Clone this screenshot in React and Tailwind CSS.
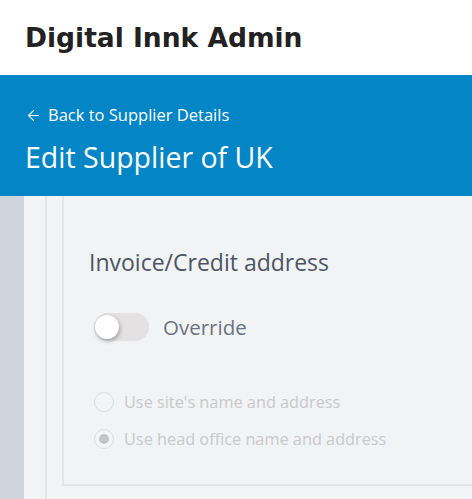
import React, { useState } from 'react';
import { ArrowLeft } from 'lucide-react';

const ui = { fontFamily: '"Segoe UI", "Open Sans", "Noto Sans", sans-serif' };

const Toggle = ({ on, onChange }) => (
  <button
    onClick={() => onChange(!on)}
    className={`relative h-[28px] w-[55px] rounded-full ${on ? 'bg-[#0385c6]' : 'bg-[#e3e1e1]'}`}
  >
    <span
      className={`absolute top-[2px] h-[24px] w-[24px] rounded-full bg-white shadow-[1px_2px_4px_rgba(0,0,0,0.3)] ${on ? 'left-[29px]' : 'left-[1px]'}`}
    />
  </button>
);

const Radio = ({ checked, label }) => (
  <label className="flex items-center gap-[10px] text-[16.3px] leading-[24px] text-[#c9c9c9]">
    <span className="flex h-[20px] w-[20px] items-center justify-center rounded-full border border-[#dcdcdc] bg-[#f3f4f6]">
      {checked && <span className="h-[10px] w-[10px] rounded-full bg-[#c4c4c4]" />}
    </span>
    {label}
  </label>
);

export default function App() {
  const [override, setOverride] = useState(false);

  return (
    <div className="flex h-[499px] flex-col overflow-hidden bg-white" style={ui}>
      <header className="flex h-[75px] shrink-0 items-center px-[25px]">
        <h1
          className="text-[26.5px] font-bold text-[#222]"
          style={{ fontFamily: '"DejaVu Sans", Verdana, sans-serif' }}
        >
          Digital Innk Admin
        </h1>
      </header>

      <div className="flex h-[121px] shrink-0 flex-col bg-[#0385c6] px-[25px] pt-[29px] text-white">
        <a className="flex items-center gap-[6px] text-[16.5px] leading-[22px]">
          <ArrowLeft size={17} strokeWidth={1.5} />
          Back to Supplier Details
        </a>
        <h2 className="mt-[12px] text-[28.5px] leading-[38px]">Edit Supplier of UK</h2>
      </div>

      <div className="flex flex-1">
        <aside className="w-[24px] shrink-0 bg-[#d0d4dc]" />
        <main className="flex-1 bg-[#f2f3f5] pl-[21px]">
          <div className="h-full border-l-2 border-[#e4e5e7] pl-[15px]">
            <section className="h-[290px] border-b-2 border-l-2 border-[#e4e5e7] px-[25px] pt-[51px]">
              <h3 className="text-[23px] leading-[31px] text-[#4b5563]">Invoice/Credit address</h3>
              <div className="mt-[34px] flex items-center gap-[14px] pl-[5px]">
                <Toggle on={override} onChange={setOverride} />
                <span className="text-[20.5px] text-[#6b7280]">Override</span>
              </div>
              <div className="mt-[47px] flex flex-col gap-[13px] pl-[5px]">
                <Radio label="Use site's name and address" />
                <Radio checked label="Use head office name and address" />
              </div>
            </section>
          </div>
        </main>
      </div>
    </div>
  );
}
